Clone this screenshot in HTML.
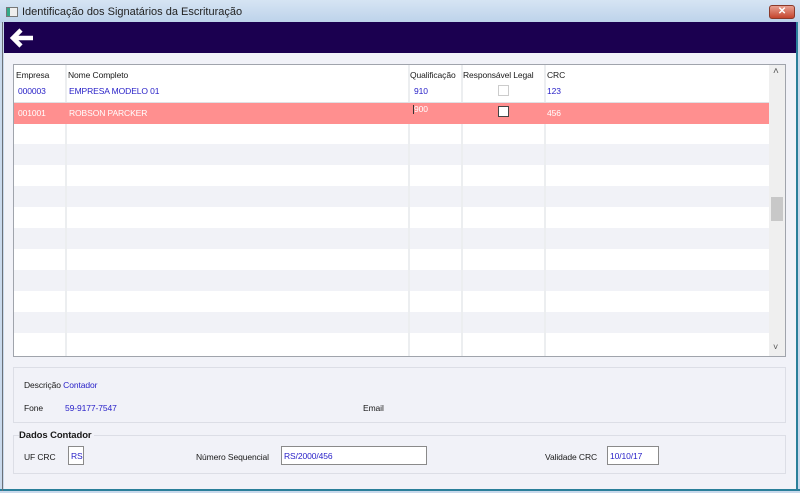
<!DOCTYPE html>
<html><head><meta charset="utf-8"><style>
*{margin:0;padding:0;box-sizing:border-box}
body{width:800px;height:493px;position:relative;overflow:hidden;font-family:"Liberation Sans",sans-serif;font-size:8.5px;letter-spacing:-0.1px;background:#c9d9ec}
.a{position:absolute}
.title{left:0;top:0;width:800px;height:23px;background:linear-gradient(#d6e4f3,#bcd2ea)}
.content{left:4px;top:22px;width:792px;height:467px;background:#f1f2f8}
.purple{left:4px;top:22px;width:792px;height:31px;background:#1b0050}
.grid{left:13px;top:64px;width:773px;height:293px;background:#fff;border:1px solid #a0a4ac;overflow:hidden}
.t{color:#1a1a1a;white-space:nowrap}
.b{color:#2a22c8;white-space:nowrap}
.w{color:#fff;white-space:nowrap}
.vl{width:2px;background:#eceef0}
.panel{border:1px solid #dcdee6;background:#f1f2f8}
.inp{background:#fff;border:1px solid #8a8a8a;color:#2a22c8;padding:2px 2px;white-space:nowrap}
</style></head><body>
<div class="a title"></div>
<div class="a" style="left:6px;top:7px;width:12px;height:10px;border:1px solid #777;background:linear-gradient(90deg,#3a8 0 30%,#eee 30%)"></div>
<div class="a t" style="left:22px;top:6px;font-size:11px;color:#222;letter-spacing:0">Identificação dos Signatários da Escrituração</div>
<div class="a" style="left:769px;top:5px;width:26px;height:14px;border:1px solid #8a3a2a;border-radius:3px;background:linear-gradient(#e8a090,#c4452e);color:#fff;font-size:10px;font-weight:bold;text-align:center;line-height:12px">✕</div>
<div class="a content"></div>
<div class="a" style="left:0;top:489px;width:800px;height:2px;background:#2a7f9a"></div>
<div class="a" style="left:796px;top:22px;width:2px;height:469px;background:#2a7f9a"></div>
<div class="a" style="left:2px;top:22px;width:1px;height:469px;background:#6a7078"></div>
<div class="a purple"></div>
<svg class="a" style="left:9px;top:27px" width="26" height="22" viewBox="0 0 26 22"><path d="M12 3 L4 11 L12 19 M4 11 H24" stroke="#fff" stroke-width="4.5" fill="none"/></svg>

<div class="a grid">
 <div class="a" style="left:0;top:38px;width:755px;height:21px;background:#ff8f8f"></div>
 <div class="a" style="left:0;top:79px;width:755px;height:21px;background:#f1f2f7"></div>
 <div class="a" style="left:0;top:121px;width:755px;height:21px;background:#f1f2f7"></div>
 <div class="a" style="left:0;top:163px;width:755px;height:21px;background:#f1f2f7"></div>
 <div class="a" style="left:0;top:205px;width:755px;height:21px;background:#f1f2f7"></div>
 <div class="a" style="left:0;top:247px;width:755px;height:21px;background:#f1f2f7"></div>
 <div class="a" style="left:0;top:37px;width:755px;height:1px;background:#e0e0e4"></div>
 <div class="a vl" style="left:51px;top:0;height:37px"></div>
 <div class="a vl" style="left:394px;top:0;height:37px"></div>
 <div class="a vl" style="left:447px;top:0;height:37px"></div>
 <div class="a vl" style="left:530px;top:0;height:37px"></div>
 <div class="a vl" style="left:51px;top:59px;height:240px"></div>
 <div class="a vl" style="left:394px;top:59px;height:240px"></div>
 <div class="a vl" style="left:447px;top:59px;height:240px"></div>
 <div class="a vl" style="left:530px;top:59px;height:240px"></div>
 <div class="a t" style="left:2px;top:5px">Empresa</div>
 <div class="a t" style="left:54px;top:5px">Nome Completo</div>
 <div class="a t" style="left:396px;top:5px">Qualificação</div>
 <div class="a t" style="left:449px;top:5px">Responsável Legal</div>
 <div class="a t" style="left:533px;top:5px">CRC</div>
 <div class="a b" style="left:4px;top:21px">000003</div>
 <div class="a b" style="left:55px;top:21px">EMPRESA MODELO 01</div>
 <div class="a b" style="left:400px;top:21px">910</div>
 <div class="a" style="left:484px;top:20px;width:11px;height:11px;border:1px solid #ccc;background:#fff"></div>
 <div class="a b" style="left:533px;top:21px">123</div>
 <div class="a w" style="left:4px;top:43px">001001</div>
 <div class="a w" style="left:55px;top:43px">ROBSON PARCKER</div>
 <div class="a w" style="left:400px;top:39px">900</div>
 <div class="a" style="left:399px;top:40px;width:1px;height:9px;background:#333"></div>
 <div class="a" style="left:484px;top:41px;width:11px;height:11px;border:1px solid #444;background:#fff"></div>
 <div class="a w" style="left:533px;top:43px">456</div>
 <div class="a" style="left:755px;top:0;width:17px;height:291px;background:#efefef"></div>
 <div class="a" style="left:757px;top:132px;width:12px;height:24px;background:#c8c8c8"></div>
 <div class="a t" style="left:759px;top:1px;color:#555;font-size:10px">˄</div>
 <div class="a t" style="left:759px;top:277px;color:#555;font-size:9px">˅</div>
</div>

<div class="a panel" style="left:13px;top:367px;width:773px;height:56px"></div>
<div class="a t" style="left:24px;top:380px">Descrição <span style="color:#2a22c8">Contador</span></div>
<div class="a t" style="left:24px;top:403px">Fone</div>
<div class="a b" style="left:65px;top:403px">59-9177-7547</div>
<div class="a t" style="left:363px;top:403px">Email</div>

<div class="a panel" style="left:13px;top:435px;width:773px;height:39px"></div>
<div class="a t" style="left:19px;top:430px;font-weight:bold;font-size:9.5px;background:#f1f2f8;padding-right:2px">Dados Contador</div>
<div class="a t" style="left:24px;top:452px">UF CRC</div>
<div class="a inp" style="left:68px;top:446px;width:16px;height:19px;padding-top:4px">RS</div>
<div class="a t" style="left:196px;top:452px">Número Sequencial</div>
<div class="a inp" style="left:281px;top:446px;width:146px;height:19px;padding-top:4px">RS/2000/456</div>
<div class="a t" style="left:545px;top:452px">Validade CRC</div>
<div class="a inp" style="left:607px;top:446px;width:52px;height:19px;padding-top:4px">10/10/17</div>
</body></html>
